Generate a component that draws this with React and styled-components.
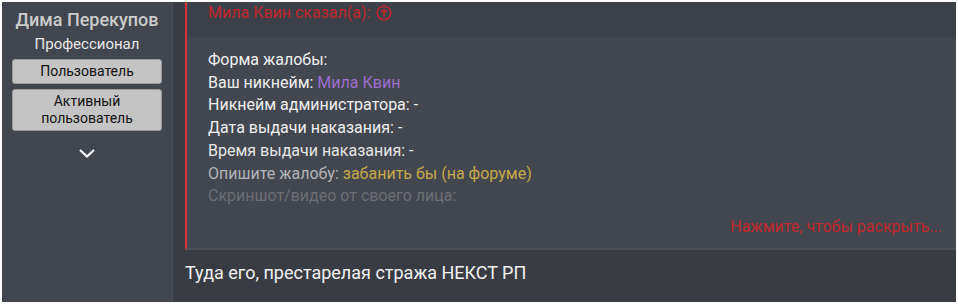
import React from "react";
import styled, { createGlobalStyle } from "styled-components";

const Global = createGlobalStyle`
  body {
    margin: 0;
    background: #ffffff;
    font-family: Roboto, "Liberation Sans", sans-serif;
  }
`;

const Frame = styled.div`
  display: flex;
  margin: 2px 2px 2px 2px;
  width: 954px;
  height: 300px;
  background: #393c43;
  overflow: hidden;
`;

const Sidebar = styled.div`
  width: 171px;
  flex-shrink: 0;
  background: #42464e;
  border-right: 1px solid #4b4f57;
  display: flex;
  flex-direction: column;
  align-items: center;
  padding-top: 7px;
  box-sizing: border-box;
`;

const Name = styled.div`
  color: #cbcbcb;
  font-size: 18px;
  font-weight: 500;
  line-height: 22px;
`;

const Title = styled.div`
  color: #e8e8e8;
  font-size: 15px;
  line-height: 18px;
  margin-top: 4px;
`;

const Badge = styled.div`
  width: 150px;
  box-sizing: border-box;
  margin-top: ${(p) => p.gap}px;
  padding: 3px 6px;
  background: #c4c4c4;
  border: 1px solid #9a9a9a;
  border-radius: 3px;
  color: #111;
  font-size: 14px;
  line-height: 17px;
  text-align: center;
`;

const Chevron = styled.div`
  margin-top: 16px;
  color: #ffffff;
  display: flex;
`;

const Main = styled.div`
  flex: 1;
  padding-left: 12px;
  display: flex;
  flex-direction: column;
`;

const Quote = styled.div`
  border-left: 2px solid #d8323c;
  border-bottom: 2px solid #4d5159;
  display: flex;
  flex-direction: column;
`;

const QuoteHead = styled.div`
  background: #3d4149;
  height: 35px;
  padding-left: 21px;
  display: flex;
  align-items: flex-start;
  gap: 6px;
  color: #c1272d;
  font-size: 16px;
  line-height: 22px;
`;

const QuoteBody = styled.div`
  background: #43474f;
  height: 211px;
  padding: 12px 14px 0 21px;
  box-sizing: border-box;
  display: flex;
  flex-direction: column;
`;

const Line = styled.div`
  font-size: 16px;
  line-height: 22.7px;
  color: ${(p) => p.color || "#f0f0f0"};
  white-space: nowrap;
`;

const Accent = styled.span`
  color: ${(p) => p.color};
`;

const Expand = styled.div`
  margin-top: 8px;
  align-self: flex-end;
  color: #c1272d;
  font-size: 16px;
  line-height: 22px;
`;

const Message = styled.div`
  padding-top: 11px;
  color: #f2f2f2;
  font-size: 18px;
  line-height: 24px;
`;

const UpCircle = () => (
  <svg width="16" height="16" viewBox="0 0 16 16" style={{ marginTop: 3 }}>
    <circle cx="8" cy="8" r="6.8" fill="none" stroke="#c1272d" strokeWidth="1.5" />
    <path d="M8 11.5V5M5.2 7.6L8 4.8l2.8 2.8" fill="none" stroke="#c1272d" strokeWidth="1.5" />
  </svg>
);

export default function App() {
  return (
    <>
      <Global />
      <Frame>
        <Sidebar>
          <Name>Дима Перекупов</Name>
          <Title>Профессионал</Title>
          <Badge gap={6}>Пользователь</Badge>
          <Badge gap={5}>
            Активный
            <br />
            пользователь
          </Badge>
          <Chevron>
            <svg width="18" height="12" viewBox="0 0 18 12">
              <path d="M2 3l7 6.5L16 3" fill="none" stroke="#fff" strokeWidth="2.2" />
            </svg>
          </Chevron>
        </Sidebar>
        <Main>
          <Quote>
            <QuoteHead>
              Мила Квин сказал(а):
              <UpCircle />
            </QuoteHead>
            <QuoteBody>
              <Line>Форма жалобы:</Line>
              <Line>
                Ваш никнейм: <Accent color="#9d6fd0">Мила Квин</Accent>
              </Line>
              <Line>Никнейм администратора: -</Line>
              <Line>Дата выдачи наказания: -</Line>
              <Line color="#e6e6e6">Время выдачи наказания: -</Line>
              <Line color="#b3b5b8">
                Опишите жалобу: <Accent color="#c6a948">забанить бы (на форуме)</Accent>
              </Line>
              <Line color="#6b6e74">Скриншот/видео от своего лица:</Line>
              <Expand>Нажмите, чтобы раскрыть...</Expand>
            </QuoteBody>
          </Quote>
          <Message>Туда его, престарелая стража НЕКСТ РП</Message>
        </Main>
      </Frame>
    </>
  );
}
